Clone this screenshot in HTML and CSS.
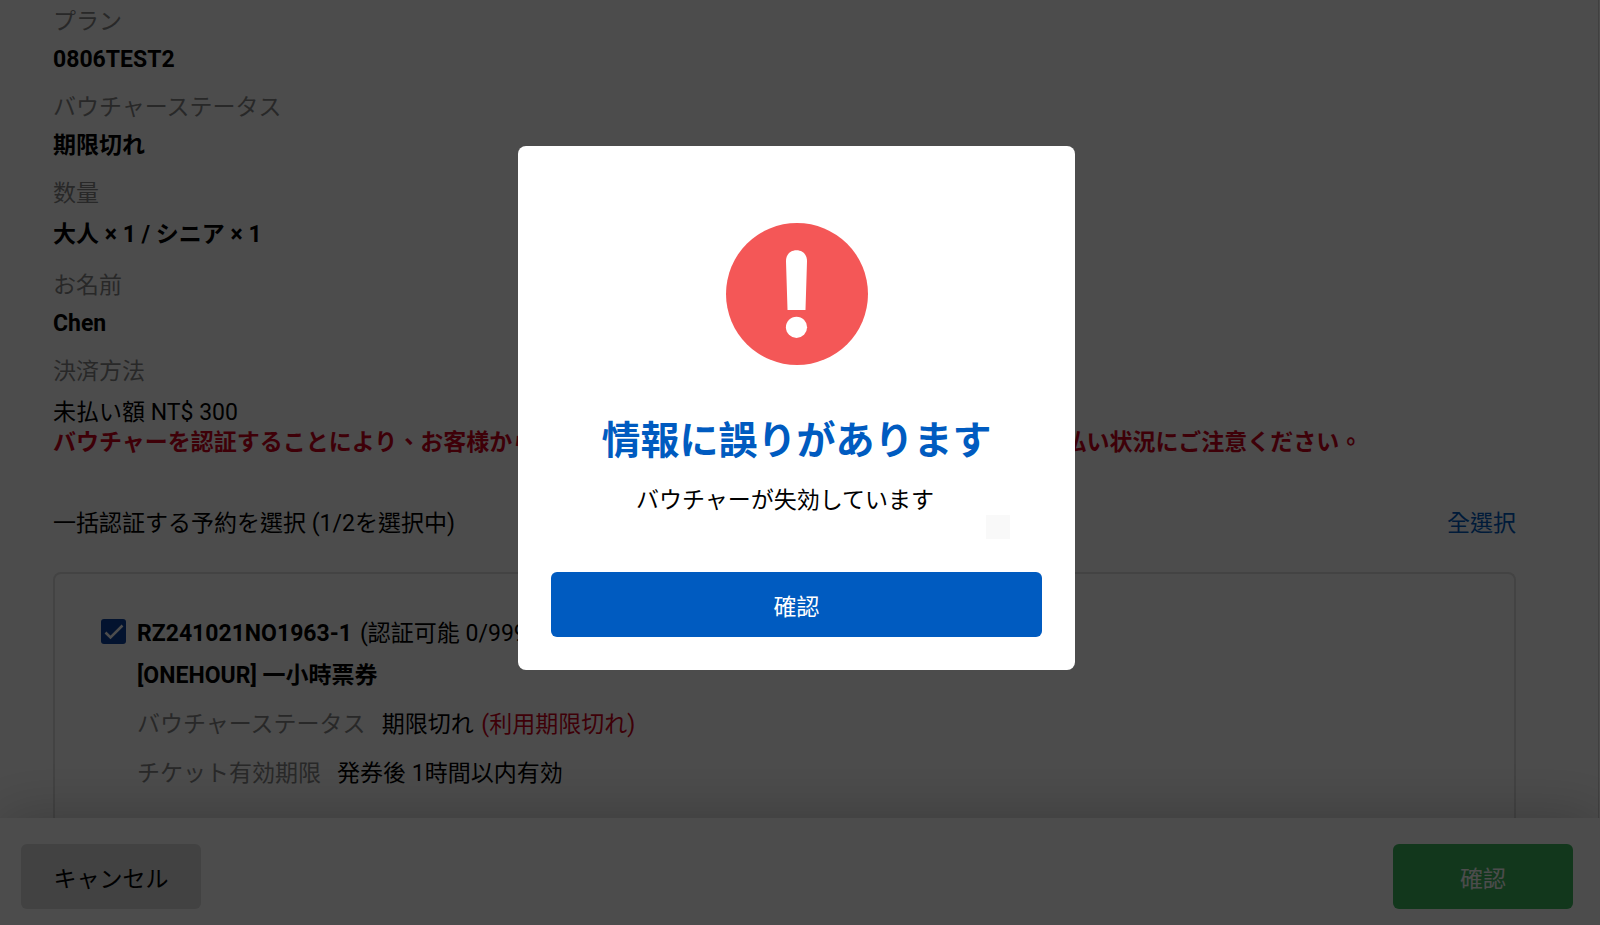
FILE: index.html
```
<!DOCTYPE html>
<html lang="zh-Hant">
	<head>
		<meta charset="UTF-8">
		<title>バウチャー認証</title>
		<link rel="stylesheet" href="styles.css">
	</head>
	<body>
		<div class="page">
			<main class="content">
				<dl class="info">
					<dt>プラン</dt>
					<dd>0806TEST2</dd>
					<dt>バウチャーステータス</dt>
					<dd>期限切れ</dd>
					<dt>数量</dt>
					<dd class="mixed">大人 × 1 / シニア × 1</dd>
					<dt>お名前</dt>
					<dd>Chen</dd>
					<dt>決済方法</dt>
					<dd class="mixed normal">未払い額 NT$ 300</dd>
				</dl>
				<p class="warning">バウチャーを認証することにより、お客様から代金の回収が必要となる場合がございます。必ず支払い状況にご注意ください。</p>

				<div class="selectBar">
					<span>一括認証する予約を選択 (1/2を選択中)</span>
					<a href="#">全選択</a>
				</div>

				<section class="card">
					<input type="checkbox" id="order1" class="check" checked>
					<div class="order">
						<div class="orderNo">
							<label for="order1">RZ241021NO1963-1</label>
							<span>(認証可能 0/999)</span>
						</div>
						<div class="orderName">[ONEHOUR] 一小時票券</div>
						<div class="row">
							<span class="rowTitle">バウチャーステータス</span>
							<span>期限切れ <span class="red">(利用期限切れ)</span></span>
						</div>
						<div class="row">
							<span class="rowTitle">チケット有効期限</span>
							<span>発券後 1時間以内有効</span>
						</div>
					</div>
				</section>
			</main>

			<footer class="footer">
				<button type="button" class="btn cancel">キャンセル</button>
				<button type="button" class="btn ok">確認</button>
			</footer>
		</div>

		<div class="mask">
			<div class="modal" role="dialog" aria-modal="true" aria-labelledby="modalTitle">
				<svg class="modalIcon" viewBox="0 0 142 142" aria-hidden="true">
					<circle cx="71" cy="71" r="71" fill="#f45757"/>
					<path d="M60 38C60 31.500 64.500 27.300 70.500 27.300S81 31.500 81 38L79.500 87H61.500Z" fill="#fff"/>
					<circle cx="70.500" cy="104.300" r="10.600" fill="#fff"/>
				</svg>
				<h2 id="modalTitle">情報に誤りがあります</h2>
				<p class="message">バウチャーが失効しています</p>
				<span class="patch"></span>
				<button type="button" class="btn primary">確認</button>
			</div>
		</div>
	</body>
</html>
```

FILE: styles.css
```
* {margin: 0; padding: 0; box-sizing: border-box;}
body {
	font-family: Roboto, "Noto Sans CJK TC", sans-serif;
	font-size: 23px;
	line-height: 30px;
	color: #000;
	background: #fff;
	overflow: hidden;
}
.page {
	height: 100vh;
	display: flex;
	flex-direction: column;
}

/* 予約情報 */
.content {
	flex: 1;
	min-height: 0;
	display: flex;
	flex-direction: column;
	overflow: hidden;
	margin-right: 1px;
	padding: 7px 82px 0 53px;
	border-right: 1px solid #d8d8d8;
}
.info dt {
	color: #888;
	margin-bottom: 8px;
}
.info dd {
	font-weight: 700;
	margin-bottom: 18px;
}
.info .mixed {
	line-height: 36px;
}
.info .normal {
	font-weight: 400;
	margin-bottom: 0;
}
.warning {
	color: #d0021b;
	font-weight: 700;
	line-height: 24px;
	white-space: nowrap;
}
.selectBar {
	display: flex;
	justify-content: space-between;
	margin: 54px 0 33px;
}
.selectBar a {
	color: #005bc0;
	text-decoration: none;
}
.card {
	flex: 1 0 auto;
	display: flex;
	align-items: flex-start;
	gap: 11px;
	padding: 45px;
	border: 2px solid #e0e0e0;
	border-bottom: none;
	border-radius: 8px 8px 0 0;
}
.check {
	appearance: none;
	width: 25px;
	height: 25px;
	margin: 0 0 0 1px;
	border-radius: 3px;
	background: #0a409e url("data:image/svg+xml,%3Csvg xmlns='http://www.w3.org/2000/svg' viewBox='0 0 24 24'%3E%3Cpath d='M3.500 12.500l5 5L20.500 5.500' fill='none' stroke='%23fff' stroke-width='2.5'/%3E%3C/svg%3E") center / 24px 24px;
}
.orderNo {
	display: flex;
	gap: 8px;
	margin-bottom: 12px;
}
.orderNo label, .orderName {
	font-weight: 700;
}
.row {
	display: flex;
	gap: 16px;
	margin-top: 19px;
}
.rowTitle {
	color: #888;
}
.red {
	margin-left: 2px;
	color: #d0021b;
}

/* ボタン */
.footer {
	position: relative;
	display: flex;
	justify-content: space-between;
	padding: 26px 27px 16px 21px;
	background: #fff;
	box-shadow: 0 0 60px rgba(0,0,0,0.25);
}
.btn {
	height: 65px;
	border: none;
	border-radius: 6px;
	font-family: inherit;
	font-size: 23px;
	cursor: pointer;
}
.cancel {
	width: 180px;
	background: #dcdcdc;
	color: #000;
}
.ok {
	width: 180px;
	background: #3cba5f;
	color: #fff;
}

/* モーダル */
.mask {
	position: fixed;
	inset: 0;
	display: flex;
	align-items: center;
	justify-content: center;
	padding: 0 7px 109px 0;
	background: rgba(0,0,0,0.7);
}
.modal {
	position: relative;
	width: 557px;
	max-width: 100%;
	display: flex;
	flex-direction: column;
	align-items: center;
	padding: 77px 33px 33px;
	background: #fff;
	border-radius: 8px;
}
.modalIcon {
	width: 142px;
	height: 142px;
}
.modal h2 {
	margin-top: 50px;
	font-size: 39px;
	line-height: 52px;
	color: #005bc0;
}
.message {
	margin: 19px 0 56px;
	padding-right: 23px;
}
.patch {
	position: absolute;
	right: 65px;
	bottom: 131px;
	width: 24px;
	height: 24px;
	background: #f9f9f9;
}
.primary {
	width: 100%;
	background: #005bc0;
	color: #fff;
}
```
